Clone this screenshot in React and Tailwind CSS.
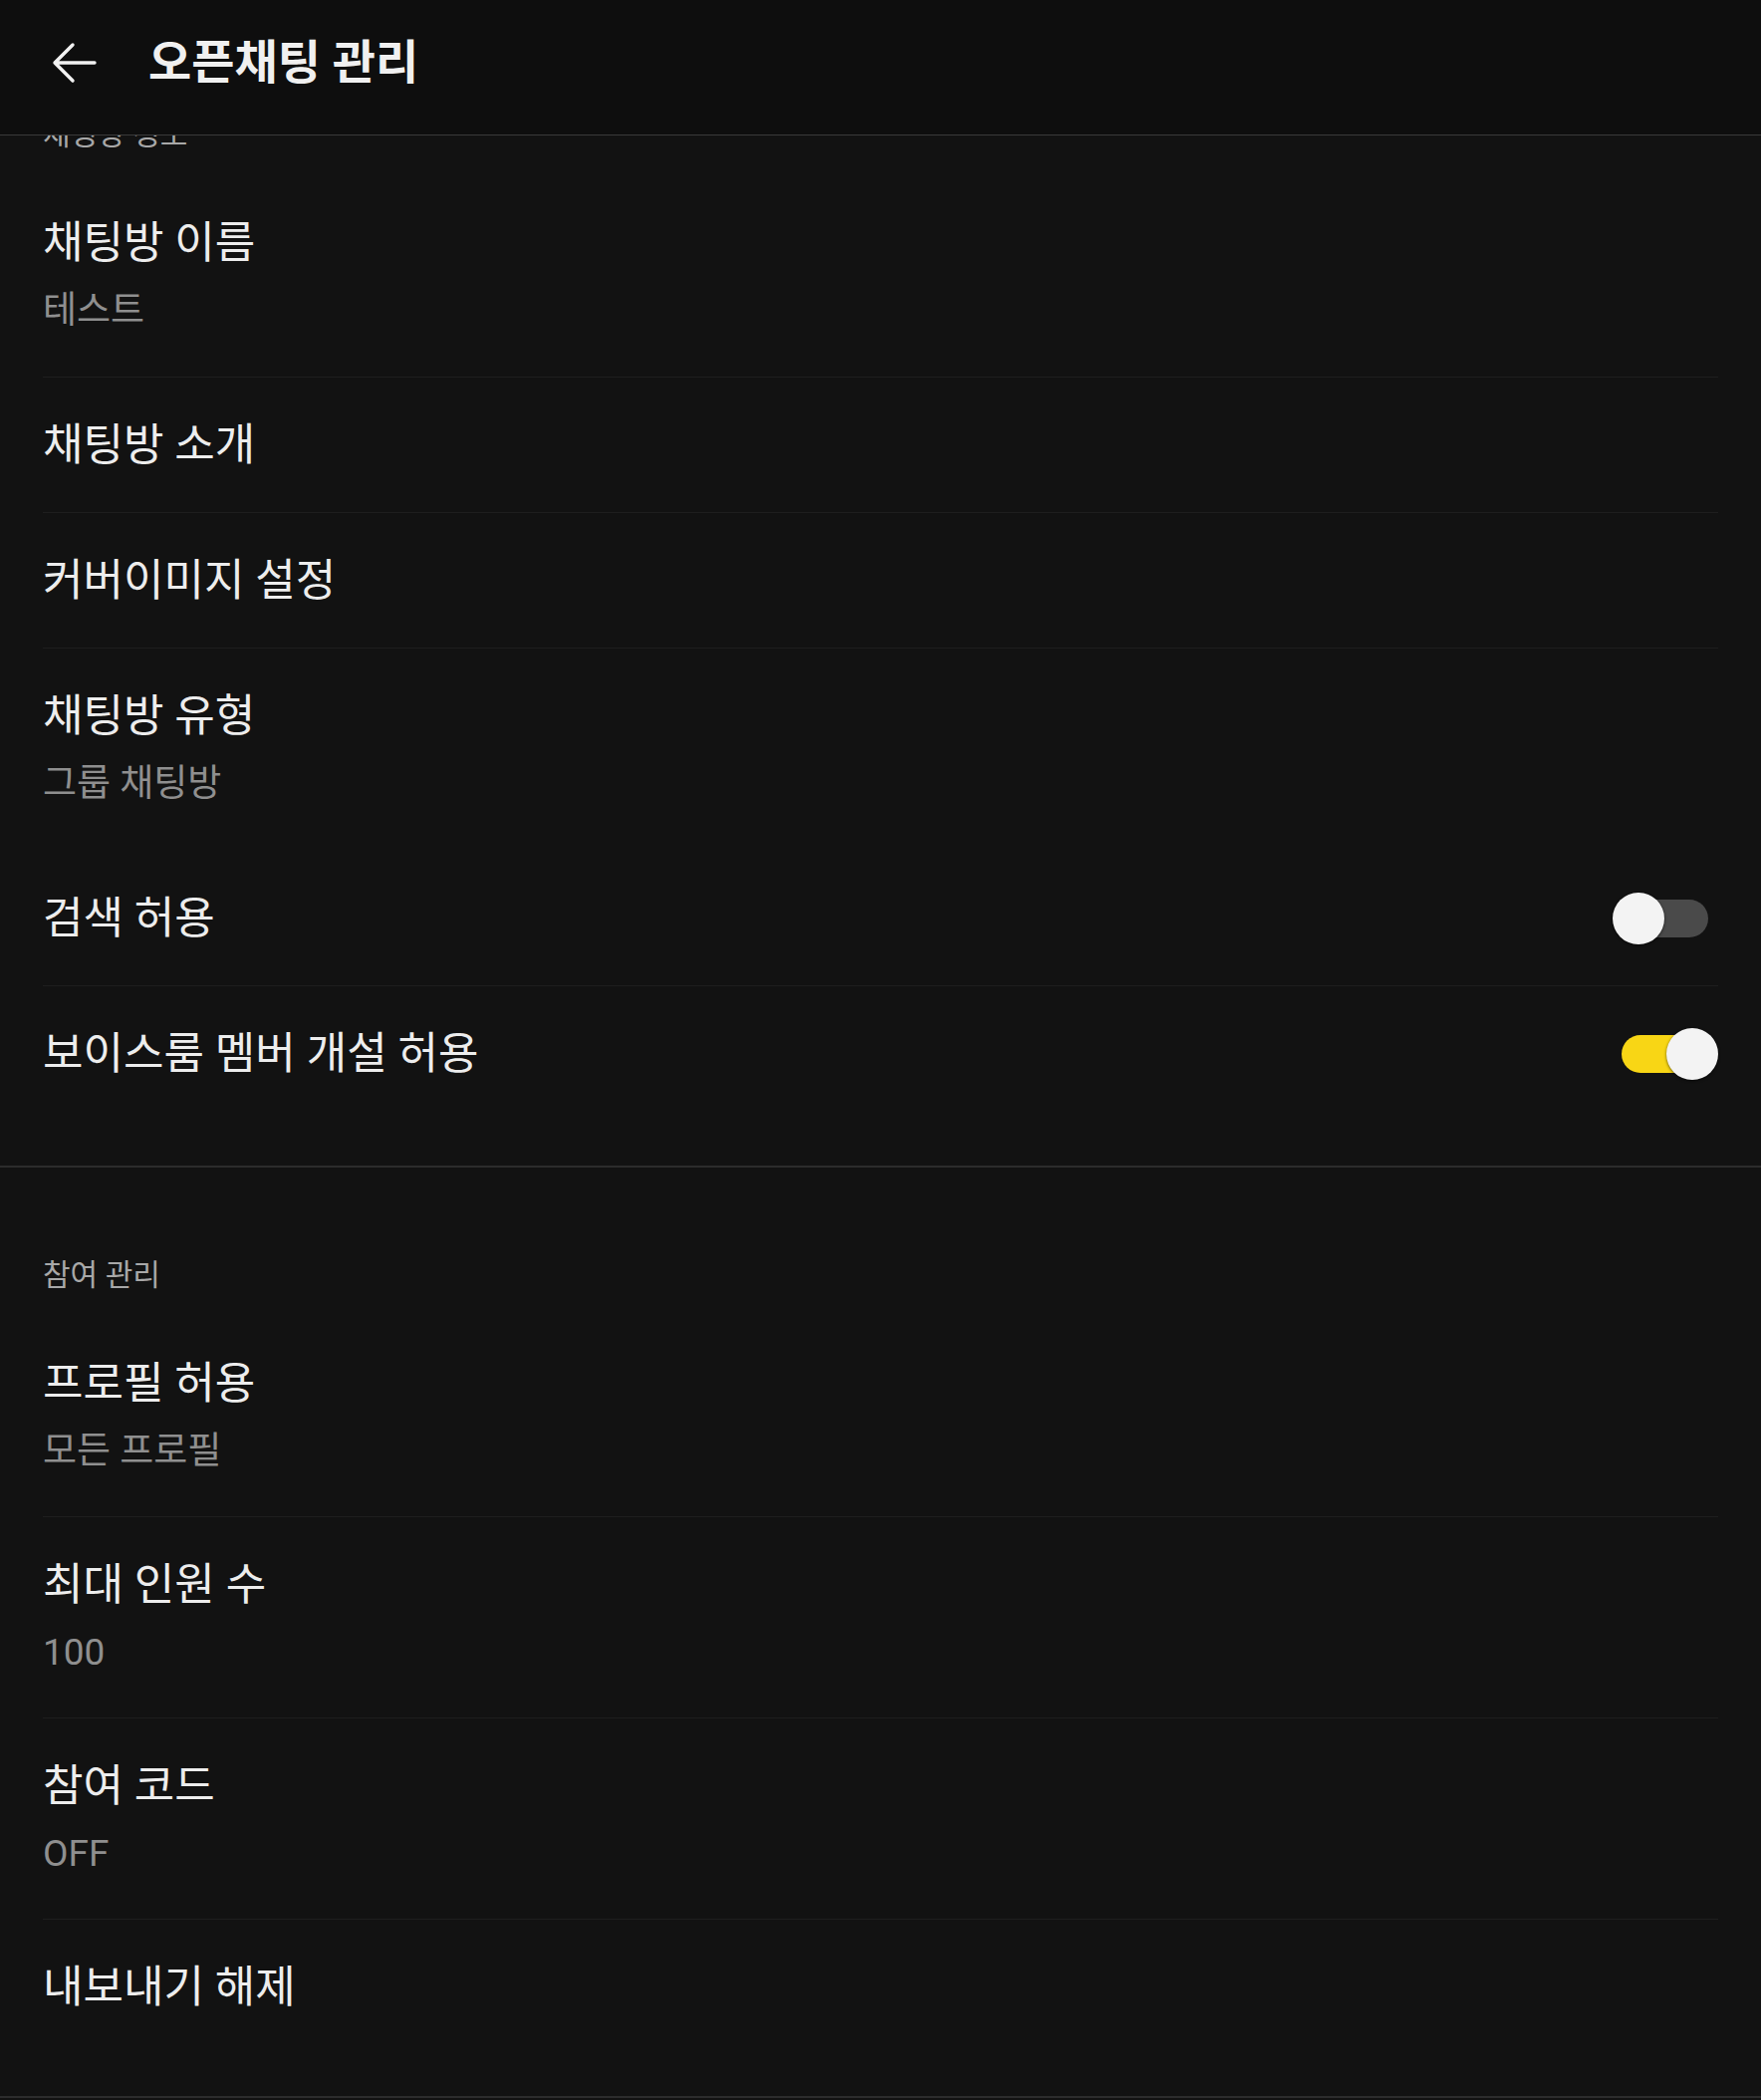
import React from "react";

const font = { fontFamily: 'Roboto, "Noto Sans CJK KR", "Noto Sans", sans-serif' };

const BackArrow = () => (
    <svg width="46" height="42" viewBox="0 0 46 42" fill="none" className="text-[#f2f2f2]">
        <path d="M44 21H4M22 3L4 21l18 18" stroke="currentColor" strokeWidth="3.4" strokeLinecap="round" strokeLinejoin="round" />
    </svg>
);

const Toggle = ({ on }) => (
    <div className="relative h-[52px] w-[106px] shrink-0">
        <div
            className={
                "absolute left-[9px] right-[10px] top-[7px] h-[38px] rounded-full " +
                (on ? "bg-[#f8d615]" : "bg-[#4a4a4a]")
            }
        ></div>
        <div
            className={
                "absolute top-0 h-[52px] w-[52px] rounded-full bg-[#f3f3f3] shadow-[0_1px_3px_rgba(0,0,0,0.6)] " +
                (on ? "right-0" : "left-0")
            }
        ></div>
    </div>
);

const Row = ({ title, sub, toggle, last, tall }) => {
    if (sub) {
        return (
            <div
                className={
                    "flex flex-col pt-[44px] " +
                    (tall ? "h-[203px] " : "h-[202px] ") +
                    (last ? "" : "border-b border-[#1e1e1e]")
                }
            >
                <div className="text-[44px] leading-[48px] text-[#ededed]">{title}</div>
                <div className="mt-[22px] text-[37px] leading-[44px] text-[#8f8f8f]">{sub}</div>
            </div>
        );
    }
    return (
        <div
            className={
                "flex items-center justify-between " +
                (tall ? "h-[136px] " : "h-[135px] ") +
                (last ? "" : "border-b border-[#1e1e1e]")
            }
        >
            <div className="text-[44px] leading-[48px] text-[#ededed]">{title}</div>
            {toggle !== undefined && <Toggle on={toggle} />}
        </div>
    );
};

export default function App() {
    return (
        <div className="min-h-screen w-full bg-[#121212]" style={font}>
            {/* top bar */}
            <div className="flex h-[136px] items-center gap-[52px] border-b border-[#3a3a3a] bg-[#0e0e0e] pb-[10px] pl-[51px]">
                <BackArrow />
                <div className="text-[47px] font-bold leading-[56px] text-[#f0f0f0]">오픈채팅 관리</div>
            </div>

            {/* 채팅방 정보 (scrolled) */}
            <div className="px-[43px]">
                <div className="h-[40px] overflow-hidden">
                    <div className="-mt-[19px] text-[30px] leading-[36px] text-[#a8a8a8]">채팅방 정보</div>
                </div>
                <Row title="채팅방 이름" sub="테스트" tall />
                <Row title="채팅방 소개" tall />
                <Row title="커버이미지 설정" tall />
                <Row title="채팅방 유형" sub="그룹 채팅방" last tall />
                <Row title="검색 허용" toggle={false} tall />
                <Row title="보이스룸 멤버 개설 허용" toggle={true} last tall />
                <div className="h-[44px]"></div>
            </div>

            {/* 참여 관리 */}
            <div className="border-t-2 border-[#2c2c2c] px-[43px] pt-[90px]">
                <div className="mb-[23px] h-[36px] text-[30px] leading-[36px] text-[#a8a8a8]">참여 관리</div>
                <Row title="프로필 허용" sub="모든 프로필" />
                <Row title="최대 인원 수" sub="100" />
                <Row title="참여 코드" sub="OFF" />
                <Row title="내보내기 해제" last />
                <div className="h-[42px]"></div>
            </div>
            <div className="border-t-2 border-[#2c2c2c]"></div>
        </div>
    );
}
